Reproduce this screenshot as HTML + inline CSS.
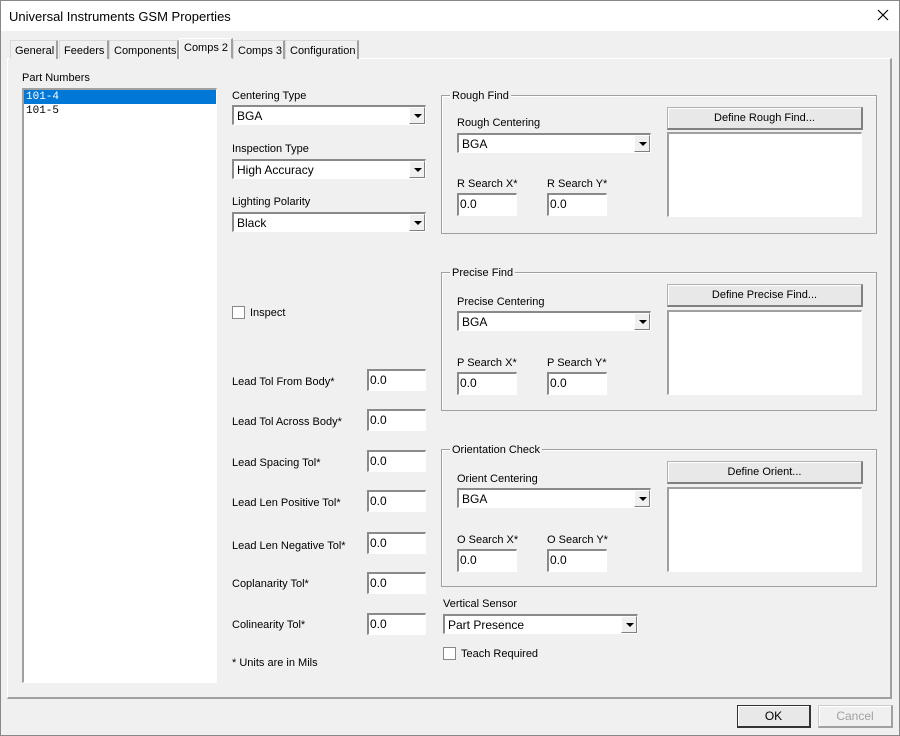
<!DOCTYPE html>
<html><head><style>
*{box-sizing:border-box;margin:0;padding:0}
body{width:900px;height:736px;background:#f0f0f0;font-family:"Liberation Sans",sans-serif;font-size:11px;color:#000;position:relative;overflow:hidden}
.a{position:absolute;white-space:nowrap}
.t{position:absolute;white-space:nowrap;margin-top:1px}
.title{left:0;top:0;width:900px;height:31px;background:#fff}
.tab{top:40px;height:19px;border:1px solid #d9d9d9;border-bottom:none;background:#f0f0f0;padding:4px 0 0 4px;border-right:2px solid #a0a0a0}
.panel{left:7px;top:58px;width:885px;height:641px;border:1px solid #fff;border-right:2px solid #a0a0a0;border-bottom:2px solid #a0a0a0}
.edit{background:#fff;border-top:2px solid #8a8a8a;border-left:2px solid #8a8a8a;border-right:1px solid #fff;border-bottom:1px solid #fff;padding:1px 0 0 1px;font-size:12px;line-height:17px}
.combo{background:#fff;border-top:2px solid #8a8a8a;border-left:2px solid #8a8a8a;border-right:1px solid #fff;border-bottom:1px solid #fff;font-size:12px;padding:2px 0 0 3px;height:20px}
.combo .btn{position:absolute;right:0;top:0;width:16px;height:17px;background:#f0f0f0;border:1px solid #fff;border-right:1px solid #808080;border-bottom:1px solid #808080}
.combo .btn:after{content:"";position:absolute;left:4px;top:6px;border-left:4px solid transparent;border-right:4px solid transparent;border-top:4px solid #000}
.group{border:1px solid #a0a0a0;box-shadow:1px 1px 0 #fff inset}
.glabel{background:#f0f0f0;padding:0 2px;font-size:11px}
.button{border:1px solid #b0b0b0;border-right:2px solid #808080;border-bottom:2px solid #808080;background:#e8e8e8;text-align:center;font-size:11px;line-height:20px;box-shadow:1px 1px 0 #fff inset}
.box{background:#fff;border-top:2px solid #a0a0a0;border-left:2px solid #a0a0a0;border-right:1px solid #fff;border-bottom:1px solid #fff}
.chk{width:13px;height:13px;background:#fff;border:1px solid #888}
</style></head><body>
<div class="a title"></div>
<div class="a" style="left:9px;top:9px;font-size:13px">Universal Instruments GSM Properties</div>
<svg class="a" style="left:877px;top:9px" width="12" height="12"><path d="M1 1L11 11M11 1L1 11" stroke="#000" stroke-width="1.2"/></svg>
<div class="a panel"></div>
<div class="a tab" style="left:10px;width:48px">General</div>
<div class="a tab" style="left:59px;width:50px">Feeders</div>
<div class="a tab" style="left:109px;width:70px">Components</div>
<div class="a tab" style="left:179px;top:38px;height:21px;width:54px;border-bottom:1px solid #f0f0f0;border-left:1px solid #fff;border-top:1px solid #fff;padding-top:3px;z-index:2">Comps 2</div>
<div class="a tab" style="left:233px;width:52px">Comps 3</div>
<div class="a tab" style="left:285px;width:74px">Configuration</div>

<div class="t" style="left:22px;top:71px">Part Numbers</div>
<div class="a box" style="left:22px;top:88px;width:195px;height:595px;font-family:'Liberation Mono',monospace;font-size:11px">
<div style="background:#0078d7;color:#fff;height:14px;padding-left:2px;line-height:15px">101-4</div>
<div style="padding-left:2px;line-height:15px">101-5</div></div>

<div class="t" style="left:232px;top:89px">Centering Type</div>
<div class="a combo" style="left:232px;top:105px;width:194px">BGA<div class="btn"></div></div>
<div class="t" style="left:232px;top:142px">Inspection Type</div>
<div class="a combo" style="left:232px;top:159px;width:194px">High Accuracy<div class="btn"></div></div>
<div class="t" style="left:232px;top:195px">Lighting Polarity</div>
<div class="a combo" style="left:232px;top:212px;width:194px">Black<div class="btn"></div></div>

<div class="a chk" style="left:232px;top:306px"></div>
<div class="t" style="left:250px;top:306px">Inspect</div>

<div class="t" style="left:232px;top:375px">Lead Tol From Body*</div><div class="a edit" style="left:367px;top:369px;width:59px;height:22px">0.0</div>
<div class="t" style="left:232px;top:415px">Lead Tol Across Body*</div><div class="a edit" style="left:367px;top:409px;width:59px;height:22px">0.0</div>
<div class="t" style="left:232px;top:456px">Lead Spacing Tol*</div><div class="a edit" style="left:367px;top:450px;width:59px;height:22px">0.0</div>
<div class="t" style="left:232px;top:496px">Lead Len Positive Tol*</div><div class="a edit" style="left:367px;top:490px;width:59px;height:22px">0.0</div>
<div class="t" style="left:232px;top:539px">Lead Len Negative Tol*</div><div class="a edit" style="left:367px;top:532px;width:59px;height:22px">0.0</div>
<div class="t" style="left:232px;top:577px">Coplanarity Tol*</div><div class="a edit" style="left:367px;top:572px;width:59px;height:22px">0.0</div>
<div class="t" style="left:232px;top:618px">Colinearity Tol*</div><div class="a edit" style="left:367px;top:613px;width:59px;height:22px">0.0</div>
<div class="t" style="left:232px;top:656px">* Units are in Mils</div>

<div class="a group" style="left:441px;top:95px;width:436px;height:139px"></div>
<div class="a glabel" style="left:450px;top:89px;margin-top:1px">Rough Find</div>
<div class="t" style="left:457px;top:116px">Rough Centering</div>
<div class="a combo" style="left:457px;top:133px;width:194px">BGA<div class="btn"></div></div>
<div class="t" style="left:457px;top:177px">R Search X*</div>
<div class="t" style="left:547px;top:177px">R Search Y*</div>
<div class="a edit" style="left:457px;top:193px;width:60px;height:23px">0.0</div>
<div class="a edit" style="left:547px;top:193px;width:60px;height:23px">0.0</div>
<div class="a button" style="left:667px;top:107px;width:196px;height:23px">Define Rough Find...</div>
<div class="a box" style="left:667px;top:132px;width:195px;height:85px"></div>

<div class="a group" style="left:441px;top:272px;width:436px;height:139px"></div>
<div class="a glabel" style="left:450px;top:266px;margin-top:1px">Precise Find</div>
<div class="t" style="left:457px;top:295px">Precise Centering</div>
<div class="a combo" style="left:457px;top:311px;width:194px">BGA<div class="btn"></div></div>
<div class="t" style="left:457px;top:356px">P Search X*</div>
<div class="t" style="left:547px;top:356px">P Search Y*</div>
<div class="a edit" style="left:457px;top:372px;width:60px;height:23px">0.0</div>
<div class="a edit" style="left:547px;top:372px;width:60px;height:23px">0.0</div>
<div class="a button" style="left:667px;top:284px;width:196px;height:23px">Define Precise Find...</div>
<div class="a box" style="left:667px;top:310px;width:195px;height:85px"></div>

<div class="a group" style="left:441px;top:449px;width:436px;height:138px"></div>
<div class="a glabel" style="left:450px;top:443px;margin-top:1px">Orientation Check</div>
<div class="t" style="left:457px;top:472px">Orient Centering</div>
<div class="a combo" style="left:457px;top:488px;width:194px">BGA<div class="btn"></div></div>
<div class="t" style="left:457px;top:533px">O Search X*</div>
<div class="t" style="left:547px;top:533px">O Search Y*</div>
<div class="a edit" style="left:457px;top:549px;width:60px;height:23px">0.0</div>
<div class="a edit" style="left:547px;top:549px;width:60px;height:23px">0.0</div>
<div class="a button" style="left:667px;top:461px;width:196px;height:23px">Define Orient...</div>
<div class="a box" style="left:667px;top:487px;width:195px;height:85px"></div>

<div class="t" style="left:443px;top:597px">Vertical Sensor</div>
<div class="a combo" style="left:443px;top:614px;width:195px">Part Presence<div class="btn"></div></div>
<div class="a chk" style="left:443px;top:647px"></div>
<div class="t" style="left:461px;top:647px">Teach Required</div>

<div class="a button" style="left:737px;top:705px;width:74px;height:23px;font-size:12px;border:1px solid #333;border-right:2px solid #333;border-bottom:2px solid #333">OK</div>
<div class="a button" style="left:818px;top:705px;width:75px;height:23px;font-size:12px;color:#a0a0a0;border:1px solid #ccc;border-right:2px solid #a0a0a0;border-bottom:2px solid #a0a0a0;background:#f0f0f0">Cancel</div>
<div class="a" style="left:0;top:0;width:900px;height:736px;border:1px solid #888"></div>
</body></html>
